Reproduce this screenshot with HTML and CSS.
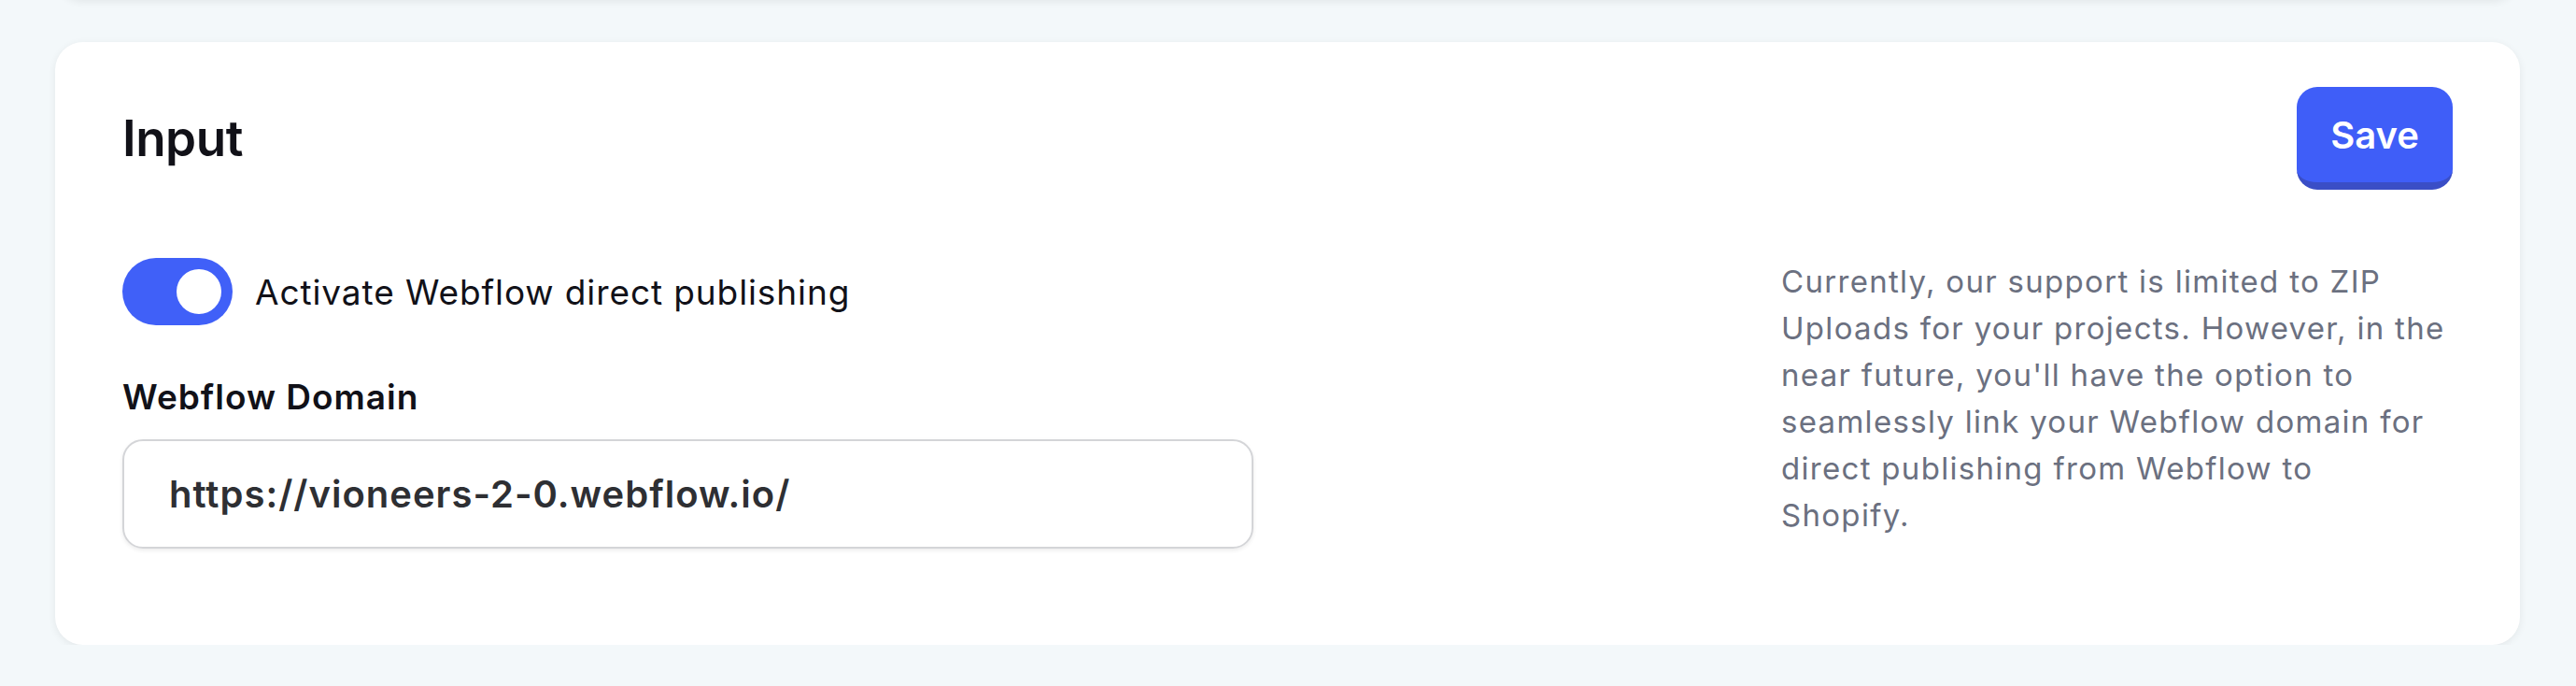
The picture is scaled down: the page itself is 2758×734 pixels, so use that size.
FILE: index.html
```html
<!DOCTYPE html>
<html lang="en">
<head>
  <meta charset="UTF-8" />
  <meta name="viewport" content="width=device-width, initial-scale=1" />
  <title>Input - Webflow publishing</title>
  <link rel="stylesheet" href="styles.css">
</head>
<body>
  <div class="card card-prev"></div>

  <div class="card">
    <div class="card-head">
      <h2>Input</h2>
      <button class="save-btn">Save</button>
    </div>

    <div class="card-body">
      <div class="left-col">
        <label class="toggle-row">
          <span class="toggle on"><span class="knob"></span></span>
          <span class="toggle-text">Activate Webflow direct publishing</span>
        </label>

        <div class="field-label">Webflow Domain</div>
        <div class="field">https://vioneers-2-0.webflow.io/</div>
      </div>

      <p class="note">
        Currently, our support is limited to ZIP<br>
        Uploads for your projects. However, in the<br>
        near future, you'll have the option to<br>
        seamlessly link your Webflow domain for<br>
        direct publishing from Webflow to<br>
        Shopify.
      </p>
    </div>
  </div>
</body>
</html>
```

FILE: styles.css
```css
body {
  font-family: 'Inter', 'Noto Sans', sans-serif;
  margin: 0;
  padding: 0 60px 0 59px;
  background: #f3f8fa;
  color: #111118;
  overflow: hidden;
}
.card {
  background: white;
  border-radius: 30px;
  box-shadow: 0 2px 8px rgba(0,0,0,0.07);
  margin-top: 45px;
  padding: 48px 72px 103px;
}
.card-prev {
  height: 60px;
  margin-top: -60px;
  padding: 0;
}
.card-head {
  display: flex;
  justify-content: space-between;
  align-items: center;
}
h2 {
  margin: 0;
  font-size: 53px;
  font-weight: 600;
  letter-spacing: -0.5px;
}
.save-btn {
  font-family: inherit;
  background: #3f5ef8;
  color: white;
  border: none;
  border-bottom: 8px solid #3a4ec6;
  border-radius: 22px;
  width: 167px;
  height: 110px;
  font-size: 40px;
  font-weight: 600;
  cursor: pointer;
}
.card-body {
  display: flex;
  justify-content: space-between;
  margin-top: 73px;
}
.left-col {
  width: 1211px;
}
.toggle-row {
  display: flex;
  align-items: center;
  gap: 24px;
  cursor: pointer;
}
.toggle {
  width: 118px;
  height: 72px;
  border-radius: 36px;
  background: #d1d5db;
  display: flex;
  align-items: center;
  padding: 0 12px;
  box-sizing: border-box;
}
.toggle.on {
  background: #4060f8;
  justify-content: flex-end;
}
.knob {
  width: 48px;
  height: 48px;
  border-radius: 50%;
  background: white;
}
.toggle-text {
  font-size: 37px;
  letter-spacing: 0.9px;
  color: #111118;
}
.field-label {
  margin-top: 52px;
  font-size: 37px;
  line-height: 50px;
  font-weight: 600;
  letter-spacing: 1px;
}
.field {
  margin-top: 20px;
  height: 117px;
  box-sizing: border-box;
  border: 2px solid #d4d5d8;
  border-radius: 22px;
  box-shadow: 0 2px 4px rgba(0,0,0,0.08);
  display: flex;
  align-items: center;
  padding: 0 48px;
  font-size: 40px;
  font-weight: 600;
  letter-spacing: 1px;
  color: #2e2f33;
}
.note {
  width: 719px;
  margin: 0;
  font-size: 33px;
  line-height: 50px;
  letter-spacing: 1.3px;
  white-space: nowrap;
  color: #6b7080;
}
```
